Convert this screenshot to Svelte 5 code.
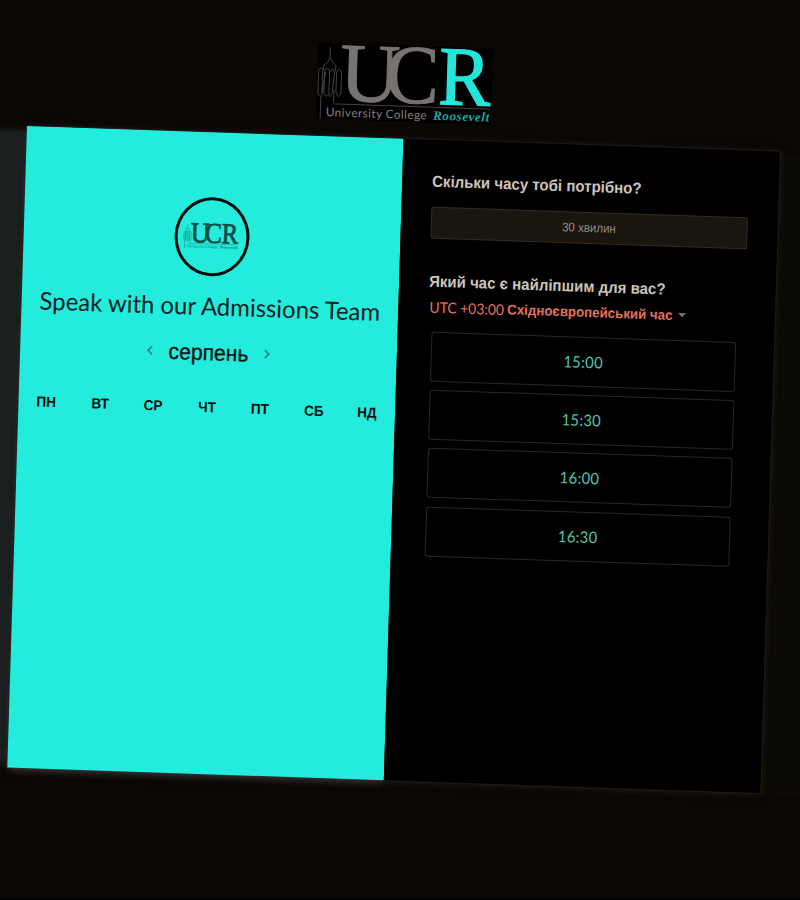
<script>
  const days = ['ПН', 'ВТ', 'СР', 'ЧТ', 'ПТ', 'СБ', 'НД'];
  const slots = ['15:00', '15:30', '16:00', '16:30'];
</script>

{#snippet logo(kind)}
  <svg class="logo {kind}" viewBox="0 0 175 76" preserveAspectRatio="none" aria-label="University College Roosevelt">
    <g class="tower">
      <path d="M12 4V14M12 14L10 19L6 22V28M12 14L15 19L18 22V28M17 46V60M6 28Q3 22 1 28V49Q2 55 5 53V28M7 29Q10 22 12 28V50Q9 56 7 50ZM8 29L5 50M13 29Q15 22 17 29L15 51Q12 56 12 50M19 29Q22 22 24 29V49Q22 57 19 49ZM4 54V76" />
    </g>
    <g class="big">
      <text x="22.500" y="57" textLength="60" lengthAdjust="spacingAndGlyphs">U</text>
      <text x="68" y="57" textLength="54" lengthAdjust="spacingAndGlyphs">C</text>
      <text class="accent" x="121.500" y="57" textLength="52" lengthAdjust="spacingAndGlyphs">R</text>
    </g>
    <path class="rule" d="M18 60.500H174" />
    <text class="small" x="9.500" y="73" textLength="101" lengthAdjust="spacing">University College</text>
    <text class="small name" x="117" y="73" textLength="56" lengthAdjust="spacing">Roosevelt</text>
  </svg>
{/snippet}

<main>
  <div class="scene">
    <header>{@render logo('banner')}</header>
    <div class="card">
      <section class="left">
        <div class="avatar">{@render logo('mini')}</div>
        <h1>Speak with our Admissions Team</h1>
        <div class="month">
          <svg viewBox="0 0 8 12"><path d="M6 2L2 6L6 10" /></svg>
          <span>серпень</span>
          <svg viewBox="0 0 8 12"><path d="M2 2L6 6L2 10" /></svg>
        </div>
        <div class="days">
          {#each days as day}<span>{day}</span>{/each}
        </div>
      </section>
      <section class="right">
        <h2 class="q1">Скільки часу тобі потрібно?</h2>
        <button class="duration"><span>30 хвилин</span></button>
        <h2 class="q2">Який час є найліпшим для вас?</h2>
        <div class="zone"><span class="utc">UTC +03:00</span><b>Східноєвропейський час</b><i></i></div>
        <div class="slots">
          {#each slots as slot}<button><span>{slot}</span></button>{/each}
        </div>
      </section>
    </div>
  </div>
</main>

<style>
  :global(body) { margin: 0; background: #0b0704; }
  main {
    width: 800px;
    height: 900px;
    overflow: hidden;
    box-sizing: border-box;
    border-bottom: 1px solid #000;
    font-family: "Liberation Sans", Arial, sans-serif;
    background:
      linear-gradient(#0b070400, #1b1f20 7px, #1b1f20 630px, #0b070400) 0 126px / 28px 645px no-repeat,
      linear-gradient(#0c0a04, #0c0a04) 760px 155px / 40px 642px no-repeat,
      #0b0704;
  }
  .scene {
    width: 754px;
    padding-top: 125.500px;
    margin-left: 26.700px;
    transform: matrix(0.9987, 0.0338, -0.0307, 0.9992, 0, 0);
    transform-origin: 0 125.500px;
  }
  header { height: 76px; margin: -93px 0 17px 289px; }
  .logo { display: block; overflow: visible; }
  .banner { width: 175px; height: 76px; background: #000; }
  .logo text { font-family: "Liberation Serif", serif; fill: #777370; }
  .logo .big text { font-size: 84px; stroke: #777370; stroke-width: 0.9; }
  .logo .big .accent { fill: #23e5da; stroke: #23e5da; stroke-width: 1.4; }
  .tower path { fill: none; stroke: #4c4946; stroke-width: 0.9; }
  .rule { stroke: #54504d; stroke-width: 0.8; fill: none; }
  .logo .small { font-family: Lato, sans-serif; font-size: 11.800px; fill: #85817e; }
  .logo .name { font-family: "Liberation Serif", serif; font-style: italic; font-weight: bold; font-size: 13px; fill: #1aa9a1; }
  .mini { width: 55px; height: 26px; margin-left: -2px; }
  .mini .big text, .mini .big .accent { fill: #0c4b48; stroke: #0c4b48; stroke-width: 2.5; }
  .mini .small, .mini .name { fill: #14756f; }
  .mini .tower path { stroke: #16857e; stroke-width: 1.5; }
  .mini .rule { stroke: #158b84; stroke-width: 1.5; }
  .card {
    display: flex;
    height: 642px;
    box-sizing: border-box;
    background: #000;
    border-radius: 2px;
    box-shadow: 0 0 1px 1px #1d1b19, 0 1px 7px #221f1e;
  }
  .left {
    width: 377px;
    height: 642px;
    box-sizing: border-box;
    padding-top: 65.200px;
    background: #24ecdd;
    display: flex;
    flex-direction: column;
    align-items: center;
    color: #07211f;
    box-shadow: 0 4px 9px -2px #393636;
    clip-path: inset(0 0 -16px -3px);
  }
  .avatar {
    width: 75px;
    height: 79px;
    box-sizing: border-box;
    border: 3px solid #050b0b;
    border-radius: 50%;
    display: flex;
    align-items: center;
    justify-content: center;
  }
  h1 {
    margin: 12px 0 0;
    height: 36px;
    font: 400 24.500px/36px Lato, sans-serif;
    white-space: nowrap;
    transform: scaleX(0.977);
  }
  .month { display: flex; align-items: center; justify-content: center; gap: 12px; height: 30px; margin: 14.500px 0 0; }
  .month span { font: 400 22.500px/30px "Liberation Sans", sans-serif; color: #061413; -webkit-text-stroke: 0.400px #061413; transform: scaleX(0.94); }
  .month svg { width: 8px; height: 12px; position: relative; top: -1.500px; }
  .month path { fill: none; stroke: #168f88; stroke-width: 1.8; }
  .days { width: 375px; display: grid; grid-template-columns: repeat(7, 1fr); margin-top: 29px; text-align: center; font: 700 14.500px/20px "Liberation Sans", sans-serif; color: #050d0d; }
  .days span { transform: scaleX(0.94); }
  .right { width: 377px; box-sizing: border-box; padding: 32.500px 0 0 30px; }
  h2 { margin: 0; font-size: 16px; line-height: 20px; color: #cdc5ba; white-space: nowrap; transform: scaleX(0.94); transform-origin: 0 50%; }
  button { display: block; box-sizing: border-box; padding: 0; margin: 0; background: #000; border: 1px solid #2b2620; border-radius: 3px; }
  button span { display: inline-block; }
  .duration { width: 316.500px; height: 32px; margin-top: 15.200px; background: #1b1510; border-color: #332c25; color: #978b7e; font: 12.500px "Liberation Sans", sans-serif; }
  .duration span { transform: scaleX(0.92); }
  .q2 { margin-top: 33px; }
  .zone { display: flex; align-items: center; height: 22px; margin: 3.500px 0 0 0.800px; color: #e4705f; white-space: nowrap; font-size: 14px; }
  .zone b { width: 165px; transform: scaleX(0.95); transform-origin: 0 50%; }
  .utc { font: 15px Lato, sans-serif; width: 78px; transform: scaleX(0.93); transform-origin: 0 50%; }
  .zone i { margin-left: 6px; border: 4px solid transparent; border-top-color: #7b7168; border-bottom: 0; }
  .slots { display: flex; flex-direction: column; gap: 8.400px; width: 305px; margin: 14px 0 0 4.200px; }
  .slots button { height: 50px; color: #55c5ae; font: 16px Lato, sans-serif; letter-spacing: 0.400px; }
  .slots span { transform: scaleX(0.92); position: relative; top: -0.500px; }
</style>
